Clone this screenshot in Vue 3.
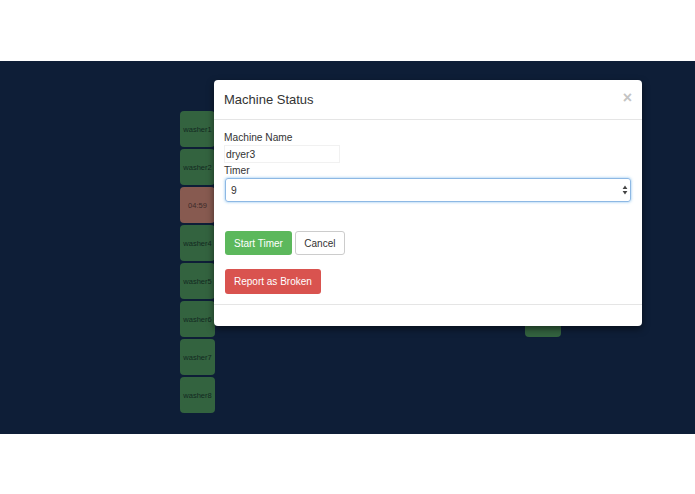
<template>
  <div class="page">
    <div class="stage">
      <div class="tile-column">
        <div
          v-for="washer in washers"
          :key="washer.name"
          class="tile"
          :class="{ busy: washer.busy }"
        >
          {{ washer.label }}
        </div>
      </div>
      <div class="tile-column dryers">
        <div v-for="dryer in dryers" :key="dryer" class="tile">{{ dryer }}</div>
      </div>

      <div class="modal">
        <div class="modal-header">
          <h4>Machine Status</h4>
          <span class="close">&times;</span>
        </div>
        <div class="modal-body">
          <label for="machine-name">Machine Name</label>
          <input id="machine-name" class="name-input" type="text" value="dryer3" />
          <label for="timer">Timer</label>
          <div class="select-box">
            <span id="timer">9</span>
            <svg class="carets" width="6" height="10" viewBox="0 0 6 10">
              <path d="M3 0.5 L5.4 4 H0.6 Z M3 9.5 L0.6 6 H5.4 Z" fill="#444" />
            </svg>
          </div>
          <div class="actions">
            <button class="btn success">Start Timer</button>
            <button class="btn plain">Cancel</button>
          </div>
          <button class="btn danger">Report as Broken</button>
        </div>
        <div class="modal-footer"></div>
      </div>
    </div>
  </div>
</template>

<script setup>
const washers = [
  { name: 'washer1', label: 'washer1' },
  { name: 'washer2', label: 'washer2' },
  { name: 'washer3', label: '04:59', busy: true },
  { name: 'washer4', label: 'washer4' },
  { name: 'washer5', label: 'washer5' },
  { name: 'washer6', label: 'washer6' },
  { name: 'washer7', label: 'washer7' },
  { name: 'washer8', label: 'washer8' }
]

const dryers = ['dryer1', 'dryer2', 'dryer3', 'dryer4', 'dryer5', 'dryer6']
</script>

<style scoped>
.page {
  width: 695px;
  height: 494px;
  padding-top: 61px;
  box-sizing: border-box;
  background: #fff;
  font-family: "Liberation Sans", Arial, sans-serif;
  overflow: hidden;
}

.stage {
  position: relative;
  height: 373px;
  box-sizing: border-box;
  padding: 50px 0 0 180px;
  display: flex;
  align-items: flex-start;
  background: #0e1e37;
}

.tile-column {
  display: flex;
  flex-direction: column;
  gap: 2px;
  width: 35px;
}

.dryers {
  margin-left: 310px;
  width: 36px;
}

.tile {
  height: 36px;
  display: flex;
  align-items: center;
  justify-content: center;
  border-radius: 4px;
  background: #33633f;
  color: #12291f;
  font-size: 7.5px;
}

.tile.busy {
  background: #875a50;
  color: #3c2a2a;
}

.modal {
  position: absolute;
  left: 214px;
  top: 19px;
  width: 428px;
  height: 246px;
  display: flex;
  flex-direction: column;
  background: #fff;
  border-radius: 4px;
  box-shadow: 0 3px 7px rgba(0, 0, 0, 0.5);
  color: #333;
}

.modal-header {
  height: 40px;
  flex: none;
  box-sizing: border-box;
  padding: 0 10px;
  display: flex;
  align-items: center;
  justify-content: space-between;
  border-bottom: 1px solid #e5e5e5;
}

.modal-header h4 {
  margin: 0;
  font-size: 13px;
  font-weight: 400;
}

.close {
  margin: -4px 0 0 0;
  color: #c4c4c4;
  font-size: 16px;
  font-weight: 700;
}

.modal-body {
  flex: 1;
  padding: 11px 11px 0 10px;
  display: flex;
  flex-direction: column;
  align-items: flex-start;
}

label {
  font-size: 10.2px;
  line-height: 14px;
}

.name-input {
  width: 116px;
  height: 18px;
  box-sizing: border-box;
  margin: 0 0 1px;
  padding: 0 1px;
  border: 1px solid #f1f1f1;
  outline: none;
  color: #333;
  font: 10.3px "Liberation Sans", Arial, sans-serif;
}

.select-box {
  width: 406px;
  height: 24px;
  box-sizing: border-box;
  margin: 0 0 0 1px;
  padding: 0 2px 0 5px;
  display: flex;
  align-items: center;
  justify-content: space-between;
  border: 1px solid #8db8e4;
  border-radius: 3px;
  box-shadow: 0 0 3px rgba(102, 175, 233, 0.8);
  font-size: 10.3px;
}

.actions {
  margin: 29px 0 14px 1px;
  display: flex;
  gap: 3px;
}

.btn {
  height: 24px;
  box-sizing: border-box;
  padding: 0 8px;
  border: 1px solid transparent;
  border-radius: 3px;
  font: 10px "Liberation Sans", Arial, sans-serif;
}

.btn.success {
  background: #5cb85c;
  color: #fff;
}

.btn.plain {
  width: 50px;
  padding: 0;
  background: #fff;
  border-color: #ccc;
  color: #333;
}

.btn.danger {
  height: 25px;
  margin-left: 1px;
  background: #d9534f;
  color: #fff;
}

.modal-footer {
  height: 21px;
  flex: none;
  border-top: 1px solid #e5e5e5;
}
</style>

<style>
html,
body {
  margin: 0;
  background: #fff;
}
</style>
